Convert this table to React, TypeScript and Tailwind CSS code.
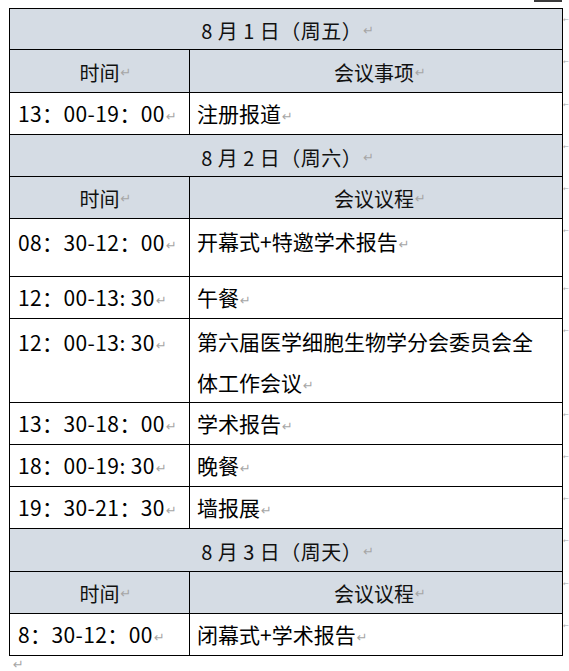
const F = { fontFamily: '"Noto Sans CJK SC", "Noto Sans", sans-serif' }

type Row =
  | { kind: "date"; text: string; h: string }
  | { kind: "head"; right: string; h: string }
  | { kind: "data"; time: string; lines: string[]; h: string; top?: boolean }

const rows: Row[] = [
  { kind: "date", text: "8 月 1 日（周五）", h: "h-[42px]" },
  { kind: "head", right: "会议事项", h: "h-[43px]" },
  { kind: "data", time: "13：00-19：00", lines: ["注册报道"], h: "h-[42px]" },
  { kind: "date", text: "8 月 2 日（周六）", h: "h-[42px]" },
  { kind: "head", right: "会议议程", h: "h-[42px]" },
  { kind: "data", time: "08：30-12：00", lines: ["开幕式+特邀学术报告"], h: "h-[58px]", top: true },
  { kind: "data", time: "12：00-13: 30", lines: ["午餐"], h: "h-[42px]" },
  {
    kind: "data",
    time: "12：00-13: 30",
    lines: ["第六届医学细胞生物学分会委员会全", "体工作会议"],
    h: "h-[84px]",
    top: true,
  },
  { kind: "data", time: "13：30-18：00", lines: ["学术报告"], h: "h-[42px]" },
  { kind: "data", time: "18：00-19: 30", lines: ["晚餐"], h: "h-[42px]" },
  { kind: "data", time: "19：30-21：30", lines: ["墙报展"], h: "h-[42px]" },
  { kind: "date", text: "8 月 3 日（周天）", h: "h-[43px]" },
  { kind: "head", right: "会议议程", h: "h-[42px]" },
  { kind: "data", time: "8：30-12：00", lines: ["闭幕式+学术报告"], h: "h-[42px]" },
]

function Mark() {
  return (
    <span className="ml-[1px] text-[13px] text-[#a6a6a6] align-[1px]" style={{ fontFamily: '"DejaVu Sans", sans-serif' }}>
      ↵
    </span>
  )
}

// end-of-row mark that peeks out past the table's right edge
function RowMark() {
  return (
    <div className="w-[6px] pt-[9px] text-[7px] leading-none text-[#a6a6a6]" style={{ fontFamily: '"DejaVu Sans", sans-serif' }}>
      ←
    </div>
  )
}

function TableRow({ row, first }: { row: Row; first: boolean }) {
  const base = `flex w-[554px] border-x border-b border-black ${first ? "border-t" : ""} ${row.h}`
  if (row.kind === "date") {
    return (
      <div className="flex">
        <div className={`${base} items-center justify-center bg-[#d5dce4] pt-[4px] pl-[4px] text-[20px] tracking-[0.5px] text-[#111]`}>
          {row.text}
          <Mark />
        </div>
        <RowMark />
      </div>
    )
  }
  if (row.kind === "head") {
    return (
      <div className="flex">
        <div className={`${base} bg-[#d5dce4] text-[20px] text-[#111]`}>
          <div className="flex w-[180px] items-center justify-center border-r border-black pl-[12px] pt-[3px]">
            时间
            <Mark />
          </div>
          <div className="flex flex-1 items-center justify-center pl-[8px] pt-[3px]">
            {row.right}
            <Mark />
          </div>
        </div>
        <RowMark />
      </div>
    )
  }
  return (
    <div className="flex">
      <div className={`${base} bg-white text-[21px] text-black`}>
        <div className={`flex w-[180px] border-r border-black pl-[8px] ${row.top ? "items-start pt-[3px]" : "items-center pt-[3px]"} leading-[40px]`}>
          <span className="tracking-[0.4px]">
            {row.time}
            <Mark />
          </span>
        </div>
        <div className={`flex flex-1 flex-col pl-[7px] ${row.top ? "justify-start pt-[2px]" : "justify-center pt-[3px]"} leading-[41px]`}>
          {row.lines.map((l, i) => (
            <div key={i}>
              {l}
              {i === row.lines.length - 1 && <Mark />}
            </div>
          ))}
        </div>
      </div>
      <RowMark />
    </div>
  )
}

export default function App() {
  return (
    <div className="relative h-[671px] w-[569px] overflow-hidden bg-white" style={F}>
      <div className="absolute right-[7px] top-0 h-[2px] w-[28px] bg-[#3a3a3a]" />
      <div className="flex flex-col pl-[9px] pt-[8px]">
        {rows.map((r, i) => (
          <TableRow key={i} row={r} first={i === 0} />
        ))}
        <div className="pl-[4px] pt-[2px] text-[13px] leading-none text-[#a6a6a6]" style={{ fontFamily: '"DejaVu Sans", sans-serif' }}>
          ↵
        </div>
      </div>
    </div>
  )
}
